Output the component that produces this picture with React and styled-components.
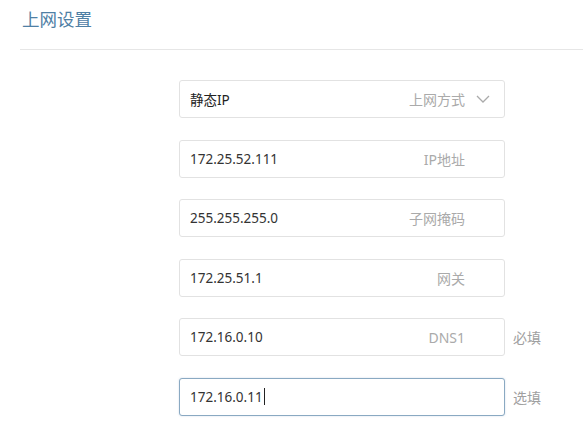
import React from "react";
import styled, { createGlobalStyle } from "styled-components";

const GlobalStyle = createGlobalStyle`
  html, body {
    margin: 0;
    padding: 0;
    background: #fff;
  }
  body {
    font-family: "Noto Sans", "Noto Sans CJK SC", sans-serif;
  }
`;

const Page = styled.div`
  width: 583px;
  height: 431px;
  overflow: hidden;
  background: #fff;
`;

const Header = styled.div`
  margin-left: 20px;
  padding: 9px 0 19px 2px;
  border-bottom: 1px solid #e6e6e6;
`;

const Title = styled.h1`
  margin: 0;
  font-size: 17.5px;
  line-height: 21px;
  font-weight: normal;
  color: #4f80a5;
`;

const Form = styled.div`
  display: flex;
  flex-direction: column;
  gap: 21.5px;
  padding: 30px 0 0 179px;
`;

const Row = styled.div`
  display: flex;
  align-items: center;
`;

const Field = styled.div`
  position: relative;
  box-sizing: border-box;
  width: 326px;
  height: 38px;
  display: flex;
  align-items: center;
  padding: 0 39px 0 10px;
  border: 1px solid ${(p) => (p.$focused ? "#8aa9c2" : "#e2e2e2")};
  border-radius: 3px;
  background: #fff;
  box-shadow: ${(p) => (p.$focused ? "0 0 2px rgba(110,150,185,0.35)" : "none")};
`;

const Value = styled.span`
  flex: 1;
  font-size: 13.5px;
  color: ${(p) => (p.$strong ? "#222" : "#333")};
  display: flex;
  align-items: center;
`;

const Caret = styled.span`
  display: inline-block;
  width: 1px;
  height: 17px;
  margin-left: 1px;
  background: #222;
`;

const Label = styled.span`
  font-size: 14px;
  color: #aaa;
  white-space: nowrap;
`;

const Chevron = styled.svg`
  position: absolute;
  right: 14px;
  top: 50%;
  margin-top: -4px;
`;

const Hint = styled.span`
  margin-left: 8px;
  font-size: 14px;
  color: #a0a0a0;
`;

const rows = [
  { value: "172.25.52.111", label: "IP地址" },
  { value: "255.255.255.0", label: "子网掩码" },
  { value: "172.25.51.1", label: "网关" },
  { value: "172.16.0.10", label: "DNS1", hint: "必填" },
  { value: "172.16.0.11", label: "", hint: "选填", focused: true },
];

export default function App() {
  return (
    <Page>
      <GlobalStyle />
      <Header>
        <Title>上网设置</Title>
      </Header>
      <Form>
        <Row>
          <Field>
            <Value $strong>静态IP</Value>
            <Label>上网方式</Label>
            <Chevron width="14" height="8" viewBox="0 0 14 8">
              <path d="M1 1 L7 7 L13 1" fill="none" stroke="#aaa" strokeWidth="1.3" />
            </Chevron>
          </Field>
        </Row>
        {rows.map((r, i) => (
          <Row key={i}>
            <Field $focused={r.focused}>
              <Value>
                {r.value}
                {r.focused && <Caret />}
              </Value>
              {r.label && <Label>{r.label}</Label>}
            </Field>
            {r.hint && <Hint>{r.hint}</Hint>}
          </Row>
        ))}
      </Form>
    </Page>
  );
}
